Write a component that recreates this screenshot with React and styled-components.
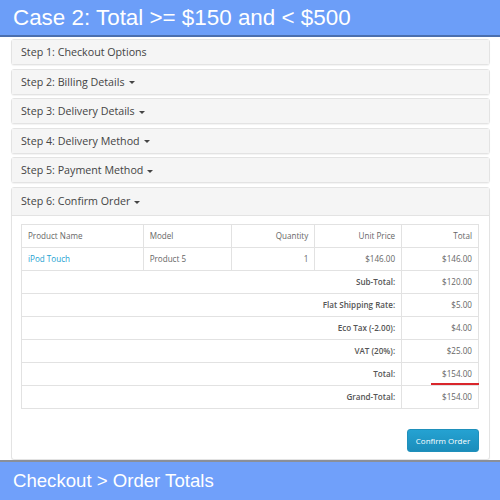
import React from 'react';
import styled, { createGlobalStyle } from 'styled-components';

const Global = createGlobalStyle`
  html, body { margin: 0; padding: 0; background: #fff; }
  body { width: 500px; height: 500px; overflow: hidden; }
`;

const Page = styled.div`
  width: 500px;
  height: 500px;
  display: flex;
  flex-direction: column;
  overflow: hidden;
`;

const Banner = styled.div`
  flex: none;
  height: ${p => p.$h}px;
  box-sizing: border-box;
  background: #6c9ef8;
  color: #fff;
  font-family: "Liberation Sans", Arial, sans-serif;
  font-size: ${p => p.$size}px;
  display: flex;
  align-items: center;
  padding-left: 13px;
  ${p => p.$top ? 'border-bottom: 2px solid #4b6fae;' : 'border-top: 2px solid #8a8f99; background: #70a0fa;'}
`;

const Content = styled.div`
  flex: 1;
  min-height: 0;
  overflow: hidden;
  padding: 2px 10px 0 11px;
  display: flex;
  flex-direction: column;
  gap: 3.6px;
  font-family: "Open Sans", sans-serif;
`;

const Panel = styled.div`
  border: 1px solid #e3e3e3;
  border-radius: 3px;
  box-shadow: 0 1px 1px rgba(0, 0, 0, 0.05);
  background: #fff;
  flex: ${p => (p.$grow ? 1 : 'none')};
  display: flex;
  flex-direction: column;
`;

const PanelHead = styled.div`
  height: ${p => p.$h || 24}px;
  box-sizing: border-box;
  background: #f5f5f5;
  border-bottom: ${p => (p.$open ? '1px solid #e3e3e3' : 'none')};
  display: flex;
  align-items: center;
  padding-left: 9px;
  font-size: 10.7px;
  color: #444;
`;

const Caret = styled.span`
  display: inline-block;
  margin-left: 4px;
  margin-top: 2px;
  border-top: 3.5px solid #444;
  border-left: 3px solid transparent;
  border-right: 3px solid transparent;
`;

const PanelBody = styled.div`
  padding: 8px 10px 0 9px;
`;

const Table = styled.table`
  width: 458px;
  border-collapse: collapse;
  font-size: 8.1px;
  color: #666;
  td {
    border: 1px solid #e2e2e2;
    height: 23px;
    padding: 0 6px;
    box-sizing: border-box;
  }
`;

const Cell = styled.td`
  text-align: ${p => (p.$right ? 'right' : 'left')};
  font-weight: ${p => (p.$bold ? 600 : 400)};
  color: ${p => (p.$bold ? '#555' : '#666')};
  width: ${p => p.$w ? `${p.$w}px` : 'auto'};
`;

const Link = styled.span`
  color: #23a1d1;
`;

const Marked = styled.span`
  display: inline-block;
  position: relative;
  &::after {
    content: '';
    position: absolute;
    right: -7px;
    left: -11px;
    bottom: -6px;
    height: 2px;
    background: #d9262b;
  }
`;

const Actions = styled.div`
  display: flex;
  justify-content: flex-end;
  padding-top: 20px;
`;

const Button = styled.button`
  width: 72px;
  height: 23px;
  border: 1px solid #1f90bb;
  border-radius: 3px;
  background: linear-gradient(#25a2d2, #1b8dbb);
  color: #fff;
  font-family: "Open Sans", sans-serif;
  font-size: 8px;
  padding: 0;
`;

const steps = [
  ['Step 1: Checkout Options', false],
  ['Step 2: Billing Details', true],
  ['Step 3: Delivery Details', true],
  ['Step 4: Delivery Method', true],
  ['Step 5: Payment Method', true],
];

const totals = [
  ['Sub-Total:', '$120.00'],
  ['Flat Shipping Rate:', '$5.00'],
  ['Eco Tax (-2.00):', '$4.00'],
  ['VAT (20%):', '$25.00'],
  ['Total:', '$154.00', true],
  ['Grand-Total:', '$154.00'],
];

export default function App() {
  return (
    <Page>
      <Global />
      <Banner $top $h={37} $size={22.4}>Case 2: Total &gt;= $150 and &lt; $500</Banner>
      <Content>
        {steps.map(([label, caret]) => (
          <Panel key={label}>
            <PanelHead>{label}{caret && <Caret />}</PanelHead>
          </Panel>
        ))}
        <Panel $grow>
          <PanelHead $h={28} $open>Step 6: Confirm Order<Caret /></PanelHead>
          <PanelBody>
            <Table>
              <tbody>
                <tr>
                  <Cell $w={122}>Product Name</Cell>
                  <Cell $w={89}>Model</Cell>
                  <Cell $w={83} $right>Quantity</Cell>
                  <Cell $w={87} $right>Unit Price</Cell>
                  <Cell $w={77} $right>Total</Cell>
                </tr>
                <tr>
                  <Cell><Link>iPod Touch</Link></Cell>
                  <Cell>Product 5</Cell>
                  <Cell $right>1</Cell>
                  <Cell $right>$146.00</Cell>
                  <Cell $right>$146.00</Cell>
                </tr>
                {totals.map(([k, v, mark]) => (
                  <tr key={k}>
                    <Cell colSpan={4} $right $bold>{k}</Cell>
                    <Cell $right>{mark ? <Marked>{v}</Marked> : v}</Cell>
                  </tr>
                ))}
              </tbody>
            </Table>
            <Actions>
              <Button>Confirm Order</Button>
            </Actions>
          </PanelBody>
        </Panel>
      </Content>
      <Banner $h={40} $size={18.6}>Checkout &gt; Order Totals</Banner>
    </Page>
  );
}
